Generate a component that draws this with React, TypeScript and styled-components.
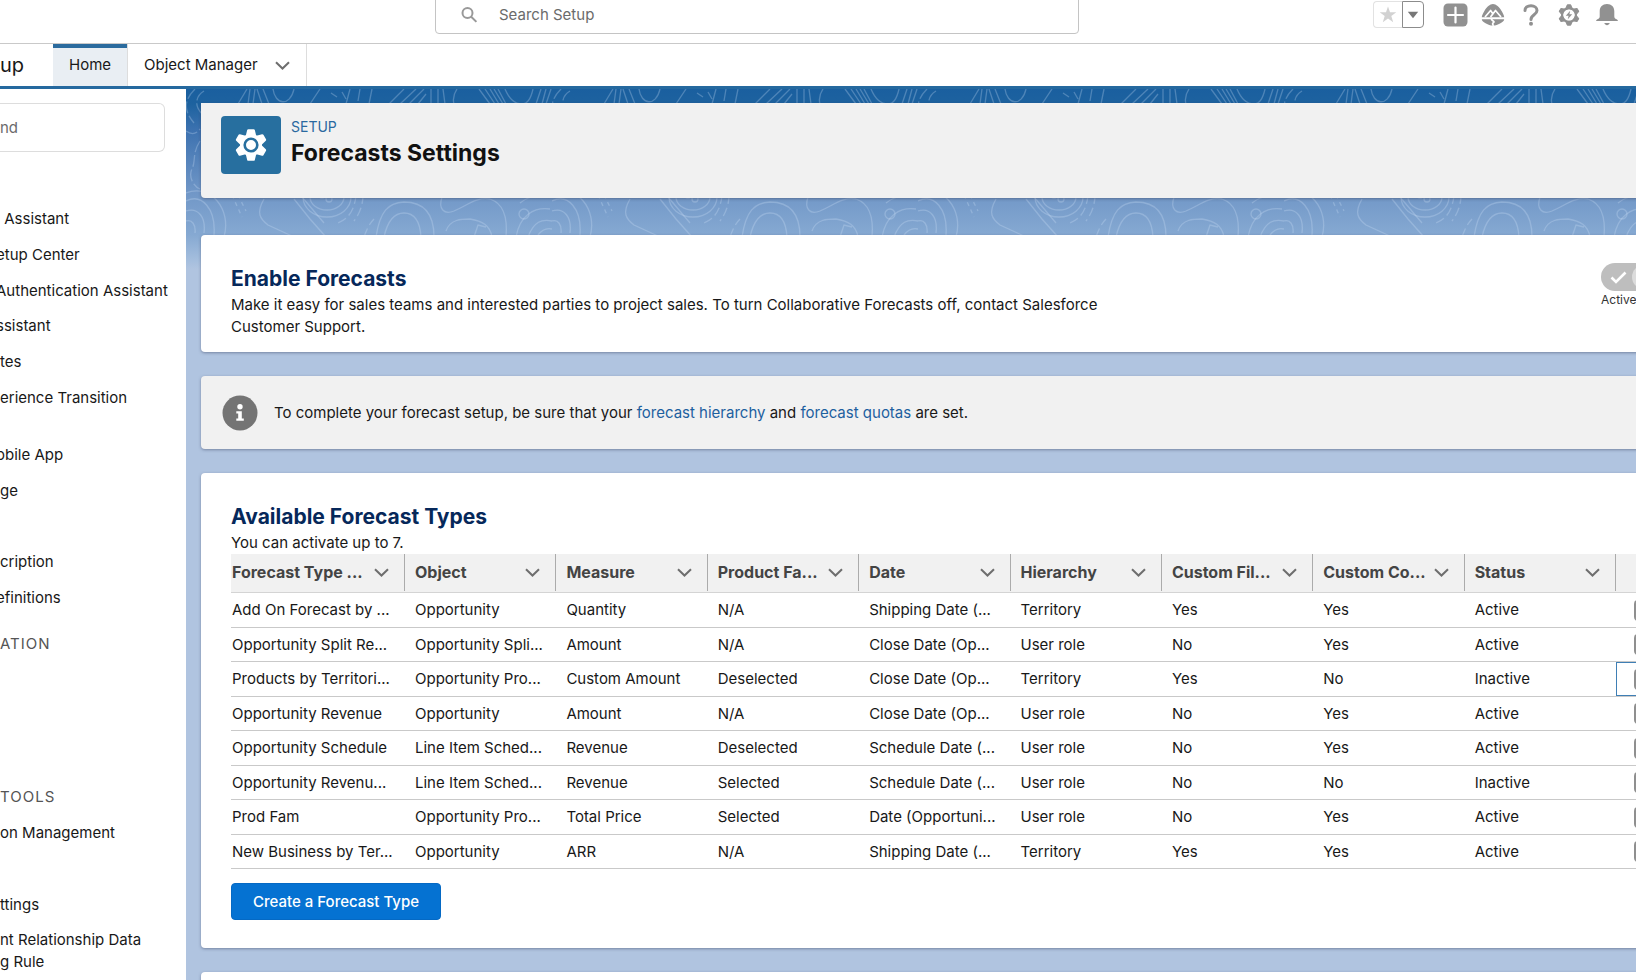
import React from 'react';
import styled, { createGlobalStyle } from 'styled-components';

const GlobalStyle = createGlobalStyle`
  *, *::before, *::after { box-sizing: border-box; }
  html, body { margin: 0; padding: 0; }
  body {
    font-family: Inter, "Liberation Sans", sans-serif;
    font-size: 15px;
    line-height: 22px;
    color: #181818;
    background: #ffffff;
    overflow: hidden;
  }
  button, input { font: inherit; color: inherit; }
  h1, h2, h3, p, ul { margin: 0; padding: 0; }
`;

const Page = styled.div`
  display: flex;
  flex-direction: column;
  height: 100vh;
  overflow: hidden;
`;

/* ---------- global header ---------- */

const GlobalHeader = styled.header`
  display: flex;
  align-items: flex-start;
  flex: none;
  height: 44px;
  padding: 0 10px 0 435px;
  border-bottom: 1px solid #c9c9c9;
`;

const SearchBox = styled.label`
  display: flex;
  align-items: center;
  gap: 21px;
  flex: 0 1 644px;
  height: 38px;
  margin-top: -4px;
  padding: 0 25px;
  border: 1px solid #c4c4c4;
  border-radius: 4px;
  color: #999999;
`;

const SearchInput = styled.input`
  flex: 1;
  min-width: 0;
  border: 0;
  outline: 0;
  padding: 0;
  background: transparent;
  &::placeholder { color: #6b6b6b; opacity: 1; }
`;

const HeaderActions = styled.div`
  display: flex;
  align-items: center;
  height: 29px;
  margin-left: auto;
`;

const FavoriteGroup = styled.div`
  display: flex;
  margin-right: 12px;
`;

const FavoriteButton = styled.button`
  display: grid;
  place-items: center;
  width: 29px;
  height: 27px;
  padding: 0;
  border: 1px solid #e2e2e2;
  border-right: 0;
  border-radius: 4px 0 0 4px;
  background: #ffffff;
`;

const FavoriteMenuButton = styled(FavoriteButton)`
  width: 22px;
  border: 1px solid #8c8c8c;
  border-radius: 0 4px 4px 0;
`;

const IconButton = styled.button`
  display: grid;
  place-items: center;
  width: 38px;
  height: 29px;
  padding: 0;
  border: 0;
  background: none;
  color: #919191;
`;

/* ---------- navigation bar ---------- */

const NavBar = styled.nav`
  display: flex;
  flex: none;
  height: 45px;
  border-bottom: 3px solid #25699f;
`;

const AppName = styled.span`
  width: 53px;
  font-size: 20px;
  line-height: 43px;
`;

const NavTab = styled.a<{ $active?: boolean }>`
  display: flex;
  align-items: center;
  gap: 17px;
  padding: 0 16px;
  border-right: 1px solid #dddddd;
  color: #181818;
  text-decoration: none;
  ${(p) => p.$active && `
    background: #e9eef3;
    box-shadow: inset 0 4px 0 #2b6b9e;
  `}
`;

/* ---------- body ---------- */

const Body = styled.div`
  display: flex;
  flex: 1;
  min-height: 0;
`;

const Sidebar = styled.aside`
  flex: none;
  width: 186px;
  overflow: hidden;
`;

const QuickFind = styled.input`
  display: block;
  width: 165px;
  height: 49px;
  margin: 14px 0 13px;
  padding: 0;
  border: 1px solid #dddddd;
  border-left: 0;
  border-radius: 0 6px 6px 0;
  outline: 0;
  &::placeholder { color: #6b6b6b; opacity: 1; }
`;

const TreeSection = styled.ul`
  list-style: none;
  margin-bottom: 10px;
`;

const TreeHeading = styled.h3`
  height: 36px;
  padding: 7px 0;
  font-size: 15px;
  font-weight: 400;
  letter-spacing: 1px;
  color: #555555;
`;

const TreeItem = styled.li`
  padding: 7px 0;
  &:nth-child(3n) { padding-bottom: 6px; }
`;

const TreeLink = styled.a<{ $cut?: boolean }>`
  display: block;
  min-height: 22px;
  margin-left: ${(p) => (p.$cut ? '-4px' : '0')};
  color: #181818;
  text-decoration: none;
  white-space: pre;
`;

const Workspace = styled.main`
  position: relative;
  flex: 1;
  min-width: 0;
  margin-right: -65px;
  padding: 14px 14px 0 15px;
  background: #b0c4e0;
`;

const Backdrop = styled.svg`
  position: absolute;
  inset: 0 0 auto;
  width: 100%;
  height: 180px;
  background: linear-gradient(#1a5f9f 0, #1d629f 15px, #3d72b0 42px, #7197c7 104px, #86a9d2 146px, #a3bddd 170px, #b0c4e0 180px);
`;

const Stack = styled.div`
  position: relative;
  display: flex;
  flex-direction: column;
  gap: 24px;
`;

const Card = styled.section`
  padding: 30px 30px 28px;
  border-radius: 4px;
  background: #ffffff;
  box-shadow: 0 1px 3px rgba(60, 70, 100, 0.5);
`;

const PageHeader = styled(Card)`
  display: flex;
  gap: 10px;
  height: 95px;
  margin-bottom: 13px;
  padding: 13px 20px;
  border-radius: 0 0 4px 4px;
  background: #f1f1f1;
`;

const SetupTile = styled.span`
  display: grid;
  place-items: center;
  flex: none;
  width: 60px;
  height: 58px;
  border-radius: 4px;
  background: #276f9f;
`;

const Eyebrow = styled.p`
  font-size: 14px;
  line-height: 22px;
  color: #2a699f;
`;

const PageTitle = styled.h1`
  font-size: 23px;
  line-height: 30px;
  font-weight: 700;
  color: #111111;
`;

const FeatureCard = styled(Card)`
  display: flex;
  justify-content: space-between;
  padding-bottom: 14px;
`;

const CardTitle = styled.h2`
  margin-bottom: 1px;
  font-size: 21px;
  line-height: 28px;
  font-weight: 700;
  color: #06285a;
`;

const Description = styled.p`
  max-width: 900px;
`;

const Toggle = styled.label`
  display: flex;
  flex-direction: column;
  width: 56px;
  margin-top: -2px;
  font-size: 12px;
  line-height: 18px;
  color: #333333;
`;

const ToggleTrack = styled.span`
  position: relative;
  display: flex;
  align-items: center;
  height: 28px;
  padding-left: 9px;
  border-radius: 14px;
  background: #bebebe;
`;

const ToggleInput = styled.input`
  appearance: none;
  position: absolute;
  top: 2px;
  right: 1px;
  width: 24px;
  height: 24px;
  margin: 0;
  border-radius: 50%;
  background: #dcdcdc;
`;

const Notice = styled(Card)`
  display: flex;
  align-items: center;
  gap: 16px;
  height: 73px;
  padding: 0 21px;
  background: #f1f1f1;
`;

const TextLink = styled.a`
  color: #1d609f;
  text-decoration: none;
`;

const TypesTable = styled.table`
  width: 100%;
  table-layout: fixed;
  border-collapse: separate;
  border-spacing: 0;
`;

const NameCol = styled.col` width: 174px; `;
const ActionCol = styled.col` width: 41px; `;

const HeadCell = styled.th`
  height: 39px;
  padding: 0 0 2px 10px;
  border-bottom: 1px solid #d4d4d4;
  background: linear-gradient(#ababab, #ababab) right top / 1px 37px no-repeat #f1f1f1;
  font-size: 16px;
  font-weight: 700;
  color: #444444;
  text-align: left;
  &:first-child { padding-left: 1px; }
  &:last-child { background: #f1f1f1; }
`;

const HeadContent = styled.span`
  display: flex;
  align-items: center;
  justify-content: space-between;
  padding-right: 16px;
  white-space: nowrap;
`;

const BodyRow = styled.tr`
  height: 35px;
  &:nth-child(even) { height: 34px; }
`;

const Cell = styled.td<{ $focused?: boolean }>`
  padding: 0 0 0 10px;
  border-bottom: 1px solid #c9c9c9;
  white-space: nowrap;
  overflow: hidden;
  &:first-child { padding-left: 1px; }
  &:last-child { padding-left: 18px; }
  ${(p) => p.$focused && 'box-shadow: inset 0 0 0 1px #3f7fb5;'}
`;

const RowMenuButton = styled.button`
  display: block;
  width: 22px;
  height: 21px;
  padding: 0;
  border: 2px solid #8f8f8f;
  border-radius: 4px;
  background: #ffffff;
`;

const PrimaryButton = styled.button`
  display: block;
  height: 37px;
  margin-top: 14px;
  padding: 0 21px;
  border: 1px solid #0569c4;
  border-radius: 4px;
  background: #0572d2;
  color: #ffffff;
  font-weight: 500;
`;

/* ---------- icons ---------- */

const SearchIcon = () => (
  <svg width="17" height="17" viewBox="0 0 17 17" fill="none" stroke="currentColor" strokeWidth="2" aria-hidden>
    <circle cx="6.5" cy="6" r="5" />
    <path d="M10.200 9.700 15.400 14.900" />
  </svg>
);

const Chevron = () => (
  <svg width="15" height="9" viewBox="0 0 15 9" fill="none" stroke="#6e6e6e" strokeWidth="2" aria-hidden>
    <path d="M1 1.2 7.5 7.5 14 1.2" />
  </svg>
);

const StarIcon = () => (
  <svg width="18" height="17" viewBox="0 0 18 17" fill="#d2d2d2" aria-hidden>
    <path d="M9 .5 11 6.3h6.3l-5 3.8 1.9 6.2L9 12.600l-5.200 3.700 1.900-6.200-5-3.800H7Z" />
  </svg>
);

const CaretIcon = () => (
  <svg width="12" height="8" viewBox="0 0 12 8" fill="#777777" aria-hidden>
    <path d="M.8.8h10.400L6 7.300Z" />
  </svg>
);

const PlusIcon = () => (
  <svg width="25" height="24" viewBox="0 0 25 24" aria-hidden>
    <rect x=".5" y=".5" width="24" height="23" rx="4.500" fill="currentColor" />
    <path d="M12.500 4.500v15M5 12h15" stroke="#fff" strokeWidth="2.200" strokeLinecap="round" />
  </svg>
);

const TrailIcon = () => (
  <svg width="24" height="22" viewBox="0 0 24 22" fill="none" aria-hidden>
    <path d="M12 0c3 0 6.500 3 8.600 7 1.400 2.600 2.600 4.800 2.600 6.200H.8C.8 11.800 2 9.600 3.400 7 5.500 3 9 0 12 0Z" fill="currentColor" />
    <path d="M.8 15.200h22.400c0 1.600-1.800 3-4.200 4.200-2 1-4.400 2.200-7 2.200s-5-1.200-7-2.200c-2.400-1.200-4.200-2.600-4.200-4.200Z" fill="currentColor" />
    <path d="M4 13 9.600 6.500l2.800 4 M9.500 13l5-6.500L20 13" stroke="#fff" strokeWidth="1.700" strokeLinejoin="round" />
    <path d="M11 14.500c-2 2 4 2.600 1.200 4.300-1 .8-.6 1.800.4 3" stroke="#fff" strokeWidth="1.700" />
  </svg>
);

const HelpIcon = () => (
  <svg width="16" height="22" viewBox="0 0 16 22" fill="none" aria-hidden>
    <path d="M2 6.500C2 3.500 4.500 1.700 8 1.700s6 2 6 4.800c0 4.300-6 4.300-6 9" stroke="currentColor" strokeWidth="3" strokeLinecap="round" />
    <circle cx="8" cy="19.800" r="2" fill="currentColor" />
  </svg>
);

const teeth = [0, 60, 120, 180, 240, 300];

const SetupGearIcon = () => (
  <svg width="22" height="22" viewBox="-11 -11 22 22" aria-hidden>
    {teeth.map((a) => (
      <path key={a} d="M-3.300-6-1.700-10.200H1.700L3.300-6Z" fill="currentColor" stroke="currentColor" strokeLinejoin="round" transform={`rotate(${a})`} />
    ))}
    <circle r="6.800" fill="none" stroke="currentColor" strokeWidth="2.400" />
    <circle r="5.600" fill="#fff" />
    <path d="M1.200-4.200-3.200.7H-.4L-1.200 4.200 3.200-.7H.4Z" fill="currentColor" />
  </svg>
);

const BellIcon = () => (
  <svg width="22" height="22" viewBox="0 0 22 22" fill="currentColor" aria-hidden>
    <path d="M11 0c4.500 0 7.300 3 7.300 7.300v5.200c0 1.200.6 1.900 1.600 2.400 1 .4 2 .9 2 2H.1c0-1.100 1-1.600 2-2 1-.5 1.600-1.200 1.600-2.400V7.300C3.700 3 6.500 0 11 0Z" />
    <path d="M8.300 19h5.400c-.5 1.400-1.500 2.200-2.700 2.200S8.800 20.400 8.300 19Z" />
  </svg>
);

const TileGearIcon = () => (
  <svg width="34" height="34" viewBox="-17 -17 34 34" aria-hidden>
    {teeth.map((a) => (
      <path key={a} d="M-4-9-2.600-14.600H2.600L4-9Z" fill="#fff" stroke="#fff" strokeWidth="2.500" strokeLinejoin="round" transform={`rotate(${a})`} />
    ))}
    <circle r="11" fill="#fff" />
    <circle r="6.300" fill="none" stroke="#276f9f" strokeWidth="2.600" />
  </svg>
);

const InfoIcon = () => (
  <svg width="36" height="36" viewBox="0 0 36 36" aria-hidden>
    <circle cx="18" cy="18" r="17.500" fill="#747474" />
    <circle cx="18" cy="11.800" r="2.700" fill="#fff" />
    <path d="M14.300 16.200h5.500v7.300h2v2.300h-7.500v-2.300h1.900v-5h-1.900Z" fill="#fff" />
  </svg>
);

const CheckIcon = () => (
  <svg width="17" height="13" viewBox="0 0 17 13" fill="none" stroke="#fff" strokeWidth="2.600" aria-hidden>
    <path d="M1.500 6.500 6 11 15.500 1.500" />
  </svg>
);

const TopographicBackdrop = () => (
  <Backdrop aria-hidden>
    <defs>
      <pattern id="contours" width="366" height="180" patternUnits="userSpaceOnUse">
        <g fill="none" stroke="#cfe2f5" strokeOpacity=".28" strokeWidth="1.300">
          <path d="M52 15 61 0M62 15l2-15M67 15l2-15M76 15 71 0M83 15 77 0M87 0c2 16 17 18 21 0M124 15l10-15M145 4l6 4M156 3l4 7M160 15l4-15M172 12l2-12M183 15 186 0" />
          <path d="M203 15 218 0M214 15 230 0M223 15 238 0M232 15l8-10M245 15V0M252 15V0M259 15l-2-15M268 15C266 8 269 3 271 0" />
          <path d="M293 0l11 15M299 0l10 15M304 0l9 15M308 0l9 15M312 0l8 15M319 0c5 12 11 15 17 15s9-6 11-15M355 0l-5 15M360 0l-4 15M365 0l-5 15" />
          <path d="M9 0C-3 12-2 22 8 34M18 2C8 8 8 20 20 28M0 42q8 6 14-2M14 52C6 64 10 72 6 80s2 18 8 20" strokeDasharray="12 3" />
          <path d="M0 112c16-8 30 8 28 34M0 122c12-4 20 6 18 22M0 104c24-10 46 16 38 44M0 132c6-2 10 4 9 12" />
          <path d="M46 106l10 22M52 106l8 16" strokeDasharray="4 4" />
          <path d="M78 110c-8 14-4 20 4 26l26 12M108 110l16 20 16 18M116 108l22 26" />
          <circle cx="143" cy="110" r="3" />
          <circle cx="136" cy="106" r="3" />
          <ellipse cx="141" cy="108" rx="17" ry="13" />
          <ellipse cx="141" cy="108" rx="24" ry="20" />
          <path d="M170 106q-2 22-18 28M177 106q0 14-9 26M178 148q4-12 10-18" strokeDasharray="9 4" />
          <path d="M190 148c4-26 12-34 28-35 20 0 30 12 30 35M198 148c4-18 12-24 20-24 10 0 16 8 17 24" />
          <path d="M256 108c-4 12 2 18 12 14 14-6 22-14 36-12 12 4 18 16 16 38M260 142c4-12 16-12 24-12 12 2 20 6 22 18M288 148l4-12 8 2" />
          <circle cx="338" cy="125" r="5" />
          <path d="M330 148c4-22 18-30 34-28M342 148c6-16 14-18 24-16M334 114c10-8 20-8 32-10M352 146q6-8 14-6" />
        </g>
      </pattern>
    </defs>
    <rect width="100%" height="180" fill="url(#contours)" />
  </Backdrop>
);

/* ---------- data ---------- */

type Link = { label: string; cut?: boolean; extra?: string };
type Section = { heading?: string; items: Link[] };

const sections: Section[] = [
  {
    items: [
      { label: ' Assistant' },
      { label: 'etup Center', cut: true },
      { label: 'Authentication Assistant', cut: true },
      { label: 'ssistant', cut: true },
      { label: 'tes' },
      { label: 'erience Transition', extra: ' ' },
      { label: 'obile App', cut: true },
      { label: 'ge' },
      { label: ' ' },
      { label: 'cription' },
      { label: 'efinitions', cut: true },
    ],
  },
  { heading: 'ATION', items: [{ label: ' ' }, { label: ' ' }, { label: ' ' }] },
  {
    heading: 'TOOLS',
    items: [
      { label: 'on Management' },
      { label: ' ' },
      { label: 'ttings' },
      { label: 'nt Relationship Data', extra: 'g Rule' },
    ],
  },
];

const columns = ['Forecast Type ...', 'Object', 'Measure', 'Product Fa...', 'Date', 'Hierarchy', 'Custom Fil...', 'Custom Co...', 'Status'];

const rows = [
  ['Add On Forecast by ...', 'Opportunity', 'Quantity', 'N/A', 'Shipping Date (...', 'Territory', 'Yes', 'Yes', 'Active'],
  ['Opportunity Split Re...', 'Opportunity Spli...', 'Amount', 'N/A', 'Close Date (Op...', 'User role', 'No', 'Yes', 'Active'],
  ['Products by Territori...', 'Opportunity Pro...', 'Custom Amount', 'Deselected', 'Close Date (Op...', 'Territory', 'Yes', 'No', 'Inactive'],
  ['Opportunity Revenue', 'Opportunity', 'Amount', 'N/A', 'Close Date (Op...', 'User role', 'No', 'Yes', 'Active'],
  ['Opportunity Schedule', 'Line Item Sched...', 'Revenue', 'Deselected', 'Schedule Date (...', 'User role', 'No', 'Yes', 'Active'],
  ['Opportunity Revenu...', 'Line Item Sched...', 'Revenue', 'Selected', 'Schedule Date (...', 'User role', 'No', 'No', 'Inactive'],
  ['Prod Fam', 'Opportunity Pro...', 'Total Price', 'Selected', 'Date (Opportuni...', 'User role', 'No', 'Yes', 'Active'],
  ['New Business by Ter...', 'Opportunity', 'ARR', 'N/A', 'Shipping Date (...', 'Territory', 'Yes', 'Yes', 'Active'],
];

const focusedRow = 2;

export default function App() {
  return (
    <Page>
      <GlobalStyle />
      <GlobalHeader>
        <SearchBox>
          <SearchIcon />
          <SearchInput type="search" placeholder="Search Setup" aria-label="Search Setup" />
        </SearchBox>
        <HeaderActions>
          <FavoriteGroup>
            <FavoriteButton aria-label="Add to favorites"><StarIcon /></FavoriteButton>
            <FavoriteMenuButton aria-label="Favorites list"><CaretIcon /></FavoriteMenuButton>
          </FavoriteGroup>
          <IconButton aria-label="Global actions"><PlusIcon /></IconButton>
          <IconButton aria-label="Guidance center"><TrailIcon /></IconButton>
          <IconButton aria-label="Help"><HelpIcon /></IconButton>
          <IconButton aria-label="Setup menu"><SetupGearIcon /></IconButton>
          <IconButton aria-label="Notifications"><BellIcon /></IconButton>
        </HeaderActions>
      </GlobalHeader>

      <NavBar>
        <AppName>up</AppName>
        <NavTab href="#home" $active>Home</NavTab>
        <NavTab href="#objects">Object Manager <Chevron /></NavTab>
      </NavBar>

      <Body>
        <Sidebar>
          <QuickFind type="search" placeholder="nd" aria-label="Quick find" />
          <TreeHeading />
          {sections.map((section, s) => (
            <React.Fragment key={s}>
              {section.heading && <TreeHeading>{section.heading}</TreeHeading>}
              <TreeSection>
                {section.items.map((item, i) => (
                  <TreeItem key={i}>
                    <TreeLink href="#tree" $cut={item.cut}>
                      {item.label}
                      {item.extra && `\n${item.extra}`}
                    </TreeLink>
                  </TreeItem>
                ))}
              </TreeSection>
            </React.Fragment>
          ))}
        </Sidebar>

        <Workspace>
          <TopographicBackdrop />
          <Stack>
            <PageHeader>
              <SetupTile><TileGearIcon /></SetupTile>
              <div>
                <Eyebrow>SETUP</Eyebrow>
                <PageTitle>Forecasts Settings</PageTitle>
              </div>
            </PageHeader>

            <FeatureCard>
              <div>
                <CardTitle>Enable Forecasts</CardTitle>
                <Description>
                  Make it easy for sales teams and interested parties to project sales. To turn Collaborative Forecasts off, contact Salesforce Customer Support.
                </Description>
              </div>
              <Toggle>
                <ToggleTrack>
                  <CheckIcon />
                  <ToggleInput type="checkbox" role="switch" defaultChecked disabled />
                </ToggleTrack>
                Active
              </Toggle>
            </FeatureCard>

            <Notice>
              <InfoIcon />
              <p>
                To complete your forecast setup, be sure that your <TextLink href="#hierarchy">forecast hierarchy</TextLink> and{' '}
                <TextLink href="#quotas">forecast quotas</TextLink> are set.
              </p>
            </Notice>

            <Card>
              <CardTitle>Available Forecast Types</CardTitle>
              <p>You can activate up to 7.</p>
              <TypesTable>
                <colgroup>
                  <NameCol />
                  {columns.slice(1).map((c) => <col key={c} />)}
                  <ActionCol />
                </colgroup>
                <thead>
                  <tr>
                    {columns.map((c) => (
                      <HeadCell key={c} scope="col">
                        <HeadContent>{c}<Chevron /></HeadContent>
                      </HeadCell>
                    ))}
                    <HeadCell aria-label="Actions" />
                  </tr>
                </thead>
                <tbody>
                  {rows.map((row, r) => (
                    <BodyRow key={row[0]}>
                      {row.map((value, c) => <Cell key={c}>{value}</Cell>)}
                      <Cell $focused={r === focusedRow}>
                        <RowMenuButton aria-label={`Actions for ${row[0]}`} />
                      </Cell>
                    </BodyRow>
                  ))}
                </tbody>
              </TypesTable>
              <PrimaryButton>Create a Forecast Type</PrimaryButton>
            </Card>

            <Card />
          </Stack>
        </Workspace>
      </Body>
    </Page>
  );
}
